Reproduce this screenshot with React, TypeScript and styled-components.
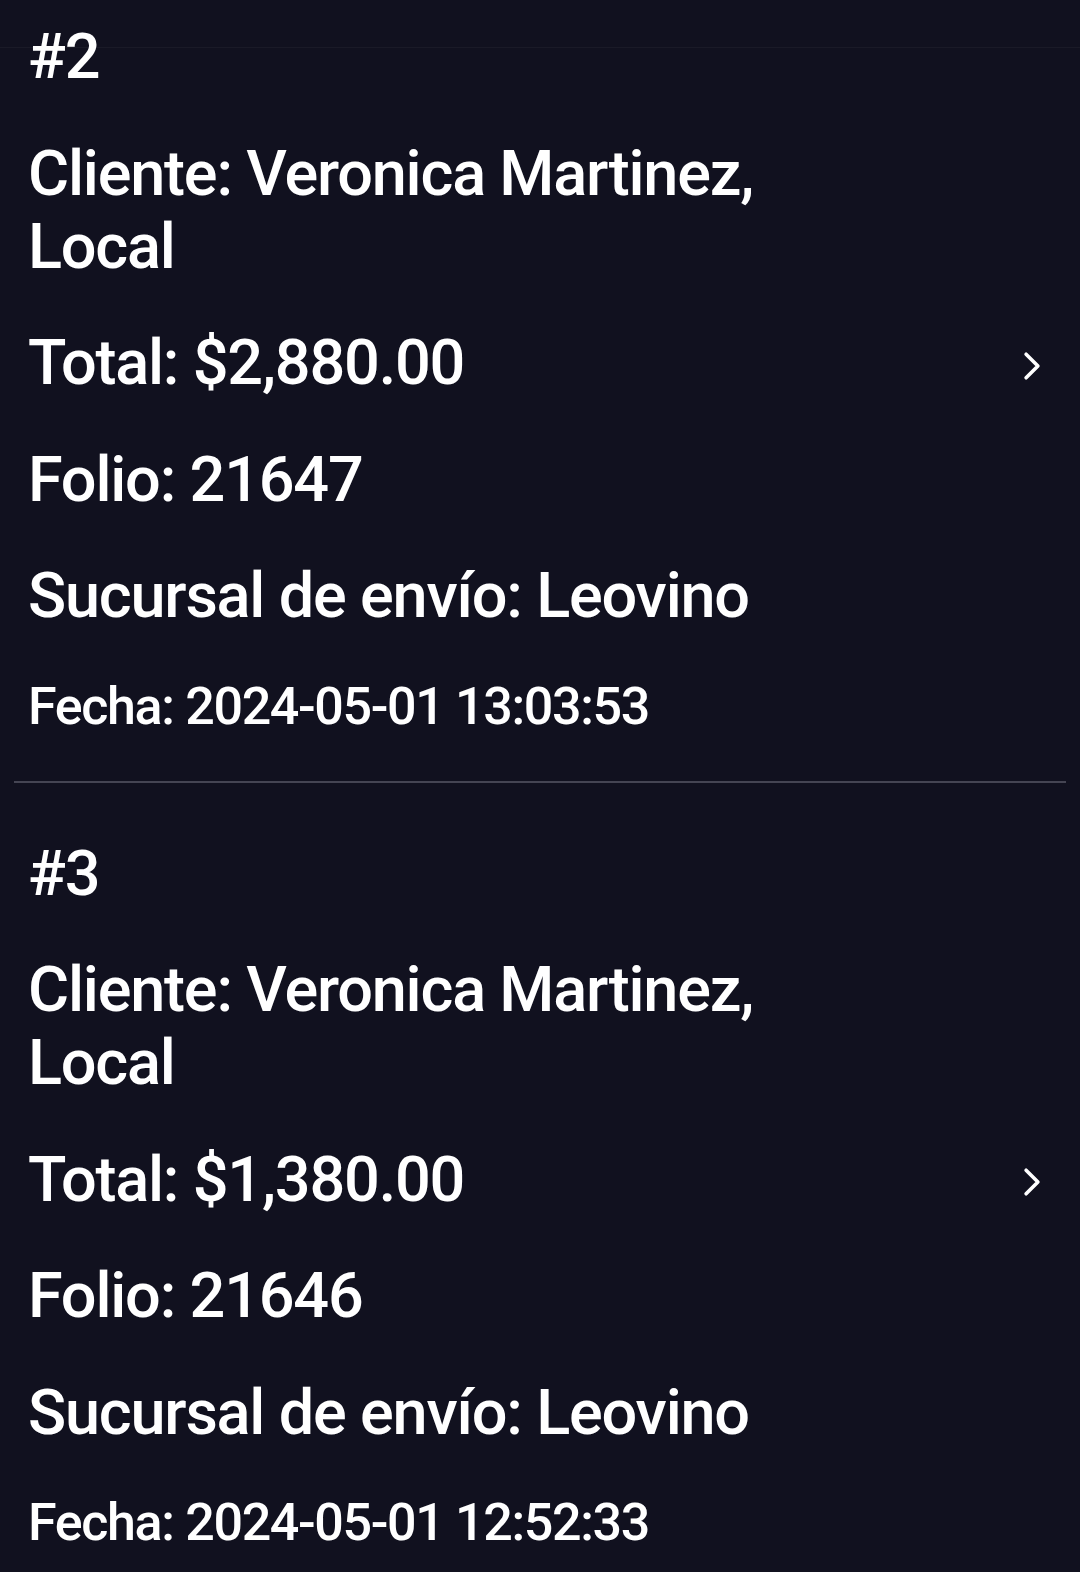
import React from "react";
import styled, { createGlobalStyle } from "styled-components";

const GlobalStyle = createGlobalStyle`
  html, body {
    margin: 0;
    padding: 0;
    background: #11111f;
  }
  body {
    font-family: Roboto, "Noto Sans", "Liberation Sans", sans-serif;
    color: #ffffff;
  }
`;

const Screen = styled.div`
  position: relative;
  width: 1080px;
  height: 1572px;
  overflow: hidden;
  background: #11111f;
`;

const TopEdge = styled.div`
  position: absolute;
  left: 0;
  right: 0;
  top: 47px;
  height: 1px;
  background: rgba(255, 255, 255, 0.04);
  pointer-events: none;
`;

const List = styled.div`
  display: flex;
  flex-direction: column;
  margin-top: -34px;
`;

const Item = styled.div`
  display: flex;
  flex-direction: column;
  gap: 43.5px;
  padding: 54px 27px 44px 28px;
`;

const Divider = styled.div`
  height: 2px;
  margin: 0 14px;
  background: #454553;
`;

const Line = styled.div<{ $small?: boolean }>`
  font-size: ${(p) => (p.$small ? "52px" : "63px")};
  line-height: normal;
  font-weight: 500;
  letter-spacing: ${(p) => (p.$small ? "-1.35px" : "-1.2px")};
  color: #ffffff;
  max-width: 800px;
`;

const TotalRow = styled.div`
  display: flex;
  align-items: center;
  justify-content: space-between;
`;

const Chevron = styled.svg`
  width: 42px;
  height: 42px;
  flex-shrink: 0;
  margin-top: 6px;
`;

type Order = {
  n: number;
  cliente: string;
  total: string;
  folio: string;
  sucursal: string;
  fecha: string;
};

const orders: Order[] = [
  {
    n: 2,
    cliente: "Veronica Martinez, Local",
    total: "$2,880.00",
    folio: "21647",
    sucursal: "Leovino",
    fecha: "2024-05-01 13:03:53",
  },
  {
    n: 3,
    cliente: "Veronica Martinez, Local",
    total: "$1,380.00",
    folio: "21646",
    sucursal: "Leovino",
    fecha: "2024-05-01 12:52:33",
  },
];

const OrderItem = ({ o }: { o: Order }) => (
  <Item>
    <Line>#{o.n}</Line>
    <Line>Cliente: {o.cliente}</Line>
    <TotalRow>
      <Line>Total: {o.total}</Line>
      <Chevron viewBox="0 0 512 512" aria-hidden="true">
        <path
          d="M184 112l144 144-144 144"
          fill="none"
          stroke="#ffffff"
          strokeWidth={44}
          strokeLinecap="round"
          strokeLinejoin="round"
        />
      </Chevron>
    </TotalRow>
    <Line>Folio: {o.folio}</Line>
    <Line>Sucursal de envío: {o.sucursal}</Line>
    <Line $small>Fecha: {o.fecha}</Line>
  </Item>
);

export default function App() {
  return (
    <Screen>
      <GlobalStyle />
      <List>
        {orders.map((o, i) => (
          <React.Fragment key={o.n}>
            {i > 0 && <Divider />}
            <OrderItem o={o} />
          </React.Fragment>
        ))}
      </List>
      <TopEdge />
    </Screen>
  );
}
